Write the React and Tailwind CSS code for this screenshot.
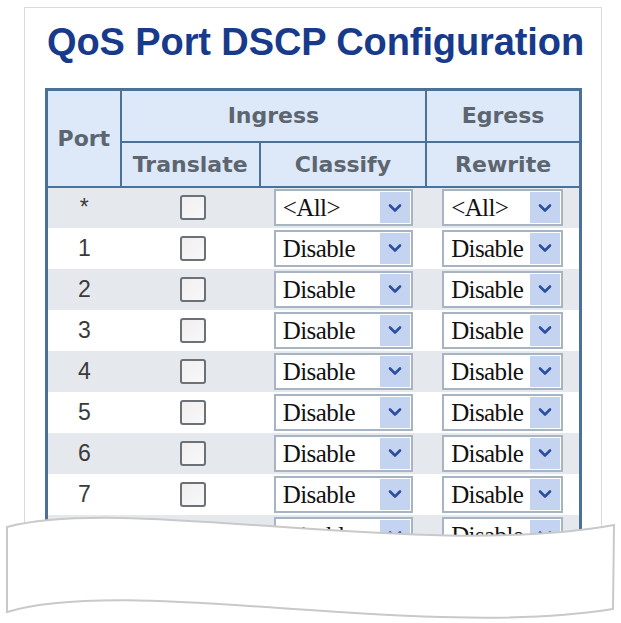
const rows = ['*', '1', '2', '3', '4', '5', '6', '7', '8', '9'];

function Chevron() {
  return (
    <svg width="14" height="10" viewBox="0 0 14 10">
      <path d="M2 2.5 L7 7.5 L12 2.5" fill="none" stroke="#2b4f9e" strokeWidth="2.6" strokeLinecap="round" strokeLinejoin="round" />
    </svg>
  );
}

function FakeSelect({ value, width }) {
  return (
    <div className={`flex h-[37px] items-center border-2 border-[#a7b4c4] bg-white pl-[7px] pr-[1px] ${width}`}>
      <span className="flex-1 text-[25px] leading-none tracking-[-0.6px] text-[#111]" style={{ fontFamily: '"Liberation Serif", serif' }}>
        {value}
      </span>
      <span className="flex h-[31px] w-[30px] items-center justify-center bg-[#c4d3ef]">
        <Chevron />
      </span>
    </div>
  );
}

function Checkbox() {
  return <div className="ml-[59px] h-[25px] w-[26px] rounded-[3px] border-2 border-[#6c7077] bg-gradient-to-br from-[#f1eeee] to-[#f8f8fa]" />;
}

export default function App() {
  const head = 'border-2 border-[#4c7197] bg-[#dde9f8] text-[22px] font-bold text-[#5c6570] text-center';
  return (
    <div className="relative h-[623px] w-[621px] overflow-hidden bg-white">
      <div className="ml-[24px] mt-[7px] h-[700px] w-[578px] border border-[#dadada] px-[20px] pt-[15px]">
        <h1 className="h-[38px] whitespace-nowrap pl-[2px] text-[38px] font-bold leading-none tracking-[-0.1px] text-[#183a8b]" style={{ fontFamily: '"Liberation Sans", Arial, sans-serif' }}>
          QoS Port DSCP Configuration
        </h1>
        <table className="mt-[27px] w-[537px] border-collapse border-[3px] border-[#4c7197]" style={{ fontFamily: '"DejaVu Sans", Verdana, sans-serif' }}>
          <colgroup>
            <col className="w-[75px]" />
            <col className="w-[140px]" />
            <col className="w-[167px]" />
            <col className="w-[155px]" />
          </colgroup>
          <thead>
            <tr className="h-[52px]">
              <th rowSpan={2} className={head}>Port</th>
              <th colSpan={2} className={head}>Ingress</th>
              <th className={head}>Egress</th>
            </tr>
            <tr className="h-[45px]">
              <th className={head}>Translate</th>
              <th className={head}>Classify</th>
              <th className={head}>Rewrite</th>
            </tr>
          </thead>
          <tbody>
            {rows.map((p, i) => (
              <tr key={p} className={`h-[41px] ${i % 2 === 0 ? 'bg-[#e5e9ed]' : 'bg-white'}`}>
                <td className="text-center text-[23px] leading-none text-[#3a3a3a]" style={{ fontFamily: '"Liberation Sans", Arial, sans-serif' }}>
                  {p}
                </td>
                <td>
                  <Checkbox />
                </td>
                <td className="pl-[14px]">
                  <FakeSelect value={p === '*' ? '<All>' : 'Disable'} width="w-[139px]" />
                </td>
                <td className="pl-[16px]">
                  <FakeSelect value={p === '*' ? '<All>' : 'Disable'} width="w-[121px]" />
                </td>
              </tr>
            ))}
          </tbody>
        </table>
      </div>

      {/* torn paper edge */}
      <svg className="absolute left-0 top-0" width="621" height="623" viewBox="0 0 621 623">
        <path d="M0 623 L0 527 L7 527 C 130 495, 420 560, 614 525 L621 525 L621 623 Z" fill="#fff" />
        <path
          d="M7 527 C 130 495, 420 560, 614 525 L613 609 C 420 640, 130 575, 7 612 Z"
          fill="#fff"
          stroke="#c9c9c9"
          strokeWidth="2"
        />
      </svg>
    </div>
  );
}
